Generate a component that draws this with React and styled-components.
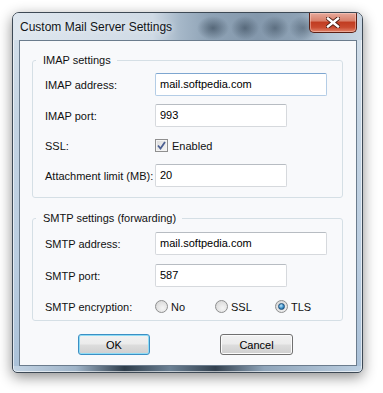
import React from "react";
import styled, { createGlobalStyle } from "styled-components";

const GlobalStyle = createGlobalStyle`
  html, body {
    margin: 0;
    padding: 0;
    background: #ffffff;
  }
  body {
    font-family: "Liberation Sans", Arial, sans-serif;
    font-size: 11px;
    color: #111;
  }
`;

const Page = styled.div`
  width: 383px;
  height: 393px;
  box-sizing: border-box;
  padding: 12px 0 0 12px;
`;

const Window = styled.div`
  width: 351px;
  height: 361px;
  box-sizing: border-box;
  display: flex;
  flex-direction: column;
  border: 1px solid #3d4955;
  border-radius: 7px 7px 5px 5px;
  overflow: hidden;
  background:
    linear-gradient(90deg, #c3d4e4 0%, #9fb4c8 18%, #2e3d4b 32%, #6c8194 45%, #33414f 58%, #8fa5ba 72%, #bccfe1 100%) bottom / 100% 6px no-repeat,
    linear-gradient(180deg, #d6e1eb 0%, #c4d4e3 30%, #bacde0 70%, #aac1d8 100%);
  box-shadow: 0 4px 14px rgba(0, 0, 0, 0.45), inset 0 0 0 1px rgba(255, 255, 255, 0.6);
`;

/* the blurred dark patches stand for the glass behind the title bar */
const TitleBar = styled.div`
  height: 27px;
  flex: none;
  display: flex;
  align-items: flex-start;
  background:
    radial-gradient(ellipse 16px 12px at 200px 15px, rgba(40, 56, 72, 0.55), rgba(40, 56, 72, 0) 100%),
    radial-gradient(ellipse 14px 12px at 232px 15px, rgba(40, 56, 72, 0.5), rgba(40, 56, 72, 0) 100%),
    radial-gradient(ellipse 14px 12px at 262px 15px, rgba(40, 56, 72, 0.45), rgba(40, 56, 72, 0) 100%),
    radial-gradient(ellipse 14px 12px at 290px 15px, rgba(40, 56, 72, 0.4), rgba(40, 56, 72, 0) 100%),
    linear-gradient(90deg, #dfe7ef 0%, #cfdae5 40%, #a5b7c8 48%, #8fa3b6 56%, #8498ac 70%, #8ea2b5 82%, #b5c6d6 90%, #c9d6e3 100%);
`;

const Title = styled.div`
  margin: 7px 0 0 7px;
  font-size: 12px;
  line-height: 14px;
  color: #101418;
  text-shadow: 0 0 6px rgba(255, 255, 255, 0.9);
`;

const CloseButton = styled.div`
  margin: 0 5px 0 auto;
  width: 48px;
  height: 20px;
  box-sizing: border-box;
  border: 1px solid #5c1f14;
  border-top: none;
  border-radius: 0 0 5px 5px;
  background: linear-gradient(180deg, #e7a99b 0%, #d9826d 40%, #c13d22 50%, #c94a2f 75%, #e2856c 100%);
  box-shadow: inset 0 0 0 1px rgba(255, 220, 210, 0.45);
  display: flex;
  align-items: center;
  justify-content: center;
`;

const Client = styled.div`
  flex: 1;
  margin: 0 5px 6px 6px;
  border: 1px solid #6b7c8d;
  background: #f8f9fb;
  display: flex;
  flex-direction: column;
  padding: 12px 13px 10px 12px;
`;

const Group = styled.fieldset`
  margin: ${(p) => p.$top}px 0 0 0;
  padding: ${(p) => p.$pt}px 0 ${(p) => p.$pb}px 12px;
  border: 1px solid #d5dfe5;
  border-radius: 3px;
  display: flex;
  flex-direction: column;
  gap: ${(p) => p.$gap}px;
  min-width: 0;
`;

const Legend = styled.legend`
  margin-left: -9px;
  padding: 0 6px 0 7px;
  font-size: 11px;
  line-height: 14px;
  color: #111;
`;

const Row = styled.div`
  display: grid;
  grid-template-columns: 110px auto;
  align-items: center;
  height: ${(p) => p.$h || 23}px;
`;

const Label = styled.span`
  font-size: 11px;
  color: #111;
  white-space: nowrap;
`;

const TextBox = styled.div`
  width: ${(p) => p.$w}px;
  height: 23px;
  box-sizing: border-box;
  background: #fff;
  border: 1px solid ${(p) => (p.$focus ? "#b4cde6" : "#d6d9dd")};
  border-top-color: ${(p) => (p.$focus ? "#7ea6d0" : "#b7bcc2")};
  border-radius: 2px;
  padding-left: 4px;
  font-size: 11px;
  line-height: 21px;
  color: #000;
`;

const Check = styled.label`
  display: flex;
  align-items: center;
  gap: 4px;
  font-size: 11px;
`;

const Box = styled.span`
  width: 13px;
  height: 13px;
  box-sizing: border-box;
  border: 1px solid #8f8f8f;
  background: linear-gradient(135deg, #dcdcdc 0%, #f5f5f5 100%);
  box-shadow: inset 0 0 0 1px #f4f4f4;
  display: flex;
  align-items: center;
  justify-content: center;
`;

const Radios = styled.div`
  display: flex;
`;

const RadioOption = styled.label`
  width: 60px;
  display: flex;
  align-items: center;
  gap: 3px;
  font-size: 11px;
`;

const Dot = styled.span`
  width: 13px;
  height: 13px;
  box-sizing: border-box;
  border-radius: 50%;
  border: 1px solid #8e8f8f;
  background: radial-gradient(circle at 60% 65%, #f5f5f5 0%, #e2e2e2 55%, #cfcfcf 100%);
  display: flex;
  align-items: center;
  justify-content: center;
  &::after {
    content: "";
    display: ${(p) => (p.$on ? "block" : "none")};
    width: 7px;
    height: 7px;
    box-sizing: border-box;
    border-radius: 50%;
    border: 1px solid #1e4e78;
    background: radial-gradient(circle at 40% 35%, #bfe6fa 0%, #3a8fc9 55%, #0f4d82 100%);
  }
`;

const Buttons = styled.div`
  display: flex;
  gap: 70px;
  margin-top: 13px;
  padding-left: 46px;
`;

const Button = styled.div`
  width: ${(p) => p.$w}px;
  height: 21px;
  box-sizing: border-box;
  border: 1px solid ${(p) => (p.$default ? "#3c8fc4" : "#707070")};
  border-radius: 3px;
  background: linear-gradient(180deg, #f2f2f2 0%, #ebebeb 48%, #dddddd 52%, #cfcfcf 100%);
  box-shadow: inset 0 0 0 1px ${(p) => (p.$default ? "#8fdcf5" : "#fbfbfb")};
  display: flex;
  align-items: center;
  justify-content: center;
  font-size: 11px;
  color: #000;
`;

export default function App() {
  return (
    <Page>
      <GlobalStyle />
      <Window>
        <TitleBar>
          <Title>Custom Mail Server Settings</Title>
          <CloseButton>
            <svg width="14" height="11" viewBox="0 0 14 11">
              <path d="M2 1.5 L12 9.5 M12 1.5 L2 9.5" stroke="#4a1a10" strokeWidth="4.2" strokeLinecap="square" />
              <path d="M2 1.5 L12 9.5 M12 1.5 L2 9.5" stroke="#ffffff" strokeWidth="2.4" strokeLinecap="square" />
            </svg>
          </CloseButton>
        </TitleBar>
        <Client>
          <Group $top={0} $pt={6} $pb={10} $gap={8}>
            <Legend>IMAP settings</Legend>
            <Row>
              <Label>IMAP address:</Label>
              <TextBox $w={172} $focus>mail.softpedia.com</TextBox>
            </Row>
            <Row>
              <Label>IMAP port:</Label>
              <TextBox $w={132}>993</TextBox>
            </Row>
            <Row $h={21}>
              <Label>SSL:</Label>
              <Check>
                <Box>
                  <svg width="9" height="9" viewBox="0 0 9 9">
                    <path d="M1 4.5 L3.5 7.5 L8 1" fill="none" stroke="#4b5f92" strokeWidth="1.8" />
                  </svg>
                </Box>
                Enabled
              </Check>
            </Row>
            <Row>
              <Label>Attachment limit (MB):</Label>
              <TextBox $w={132}>20</TextBox>
            </Row>
          </Group>
          <Group $top={13} $pt={7} $pb={3} $gap={9}>
            <Legend>SMTP settings (forwarding)</Legend>
            <Row>
              <Label>SMTP address:</Label>
              <TextBox $w={172}>mail.softpedia.com</TextBox>
            </Row>
            <Row>
              <Label>SMTP port:</Label>
              <TextBox $w={132}>587</TextBox>
            </Row>
            <Row $h={21}>
              <Label>SMTP encryption:</Label>
              <Radios>
                <RadioOption>
                  <Dot />
                  No
                </RadioOption>
                <RadioOption>
                  <Dot />
                  SSL
                </RadioOption>
                <RadioOption>
                  <Dot $on />
                  TLS
                </RadioOption>
              </Radios>
            </Row>
          </Group>
          <Buttons>
            <Button $w={72} $default>OK</Button>
            <Button $w={73}>Cancel</Button>
          </Buttons>
        </Client>
      </Window>
    </Page>
  );
}
